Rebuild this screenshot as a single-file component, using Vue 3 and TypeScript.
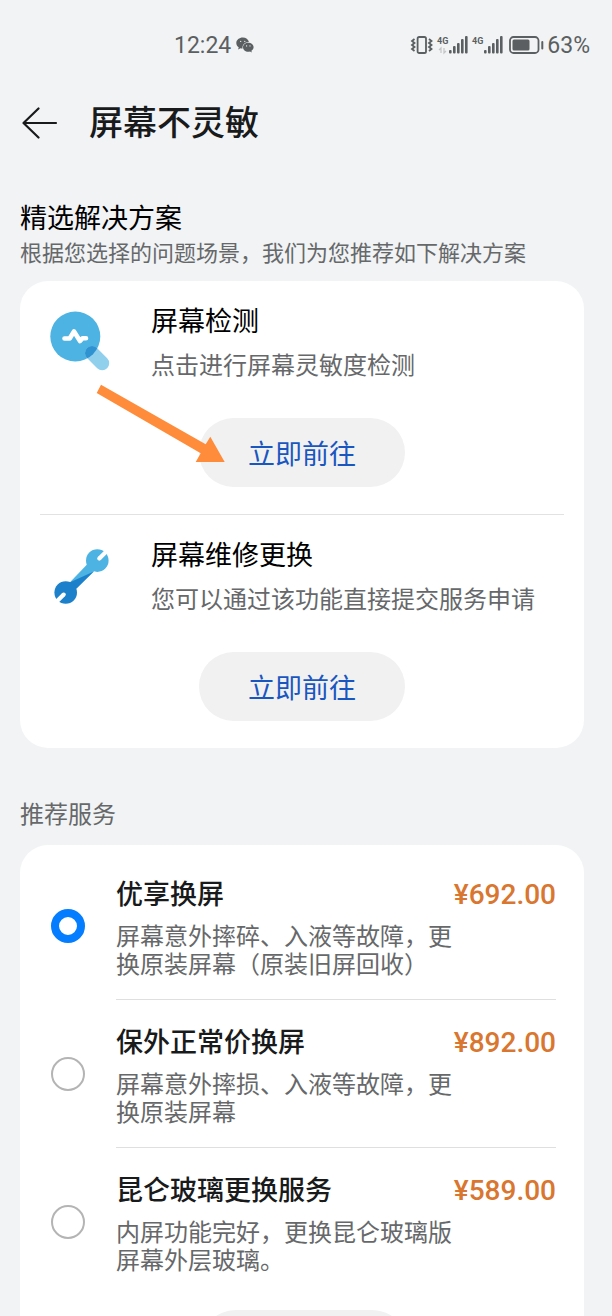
<script setup lang="ts">
import { ref } from 'vue'

interface Solution {
  id: string
  title: string
  desc: string
}

interface Service {
  id: string
  name: string
  desc: string
  price: string
}

const solutions: Solution[] = [
  { id: 'detect', title: '屏幕检测', desc: '点击进行屏幕灵敏度检测' },
  { id: 'repair', title: '屏幕维修更换', desc: '您可以通过该功能直接提交服务申请' },
]

const services: Service[] = [
  { id: 'premium', name: '优享换屏', desc: '屏幕意外摔碎、入液等故障，更换原装屏幕（原装旧屏回收）', price: '¥692.00' },
  { id: 'normal', name: '保外正常价换屏', desc: '屏幕意外摔损、入液等故障，更换原装屏幕', price: '¥892.00' },
  { id: 'glass', name: '昆仑玻璃更换服务', desc: '内屏功能完好，更换昆仑玻璃版屏幕外层玻璃。', price: '¥589.00' },
]

const selected = ref('premium')
const bars = [
  { x: 40, y: 17 },
  { x: 44, y: 13 },
  { x: 48, y: 10 },
  { x: 52, y: 6 },
  { x: 56, y: 3 },
]
</script>

<template>
  <div class="screen">
    <div class="status">
      <div class="status-group">
        <span>12:24</span>
        <svg class="chat" viewBox="0 0 18 16" aria-hidden="true">
          <path d="M6.800 .5C3.300 .5 .3 2.900 .3 6c0 1.800.9 3.300 2.400 4.300l-.6 2.100 2.400-1.200c.7.2 1.400.3 2.100.3C6 8 8.600 5 12.900 5 12.400 2.400 9.900 .5 6.800 .5z" fill="#5c5f61" />
          <path d="M12.300 5.700c-3 0-5.300 2-5.300 4.500s2.300 4.500 5.300 4.500c.6 0 1.200-.1 1.700-.2l1.800.9-.4-1.700c1.300-.8 2.200-2 2.200-3.500 0-2.500-2.400-4.500-5.300-4.500z" fill="#5c5f61" />
          <g fill="#f1f3f5">
            <circle cx="4.700" cy="4.400" r=".6" /><circle cx="8.800" cy="4.400" r=".6" />
            <circle cx="10.600" cy="8.900" r=".6" /><circle cx="14" cy="8.900" r=".6" />
          </g>
        </svg>
      </div>
      <div class="status-group right">
        <svg class="signals" viewBox="0 0 136 24" aria-hidden="true">
          <g fill="none" stroke="#5c5f61" stroke-width="1.800">
            <rect x="8.600" y="4" width="8.400" height="16" rx="1.600" />
            <path d="M5.500 6 3 8l2.500 2L3 12l2.500 2L3 16l2.500 2M20 6l2.500 2-2.500 2 2.500 2-2.500 2 2.500 2-2.500 2" />
            <rect x="101" y="4" width="28.500" height="16" rx="3.500" />
          </g>
          <g fill="#5c5f61">
            <text class="net" x="28" y="11">4G</text>
            <text class="net" x="63" y="11">4G</text>
            <rect v-for="b in bars" :key="b.x" :x="b.x" :y="b.y" width="2.600" :height="20.500 - b.y" rx="1" />
            <rect v-for="b in bars" :key="'s' + b.x" :x="b.x + 35" :y="b.y" width="2.600" :height="20.500 - b.y" rx="1" />
            <rect x="103.500" y="6.500" width="17" height="11" rx="1.500" />
            <rect x="132.300" y="8" width="2" height="8.500" rx="1" />
          </g>
          <path d="M32 20v-5l-2 2M35 15v5l2-2" fill="none" stroke="#c3c5c7" stroke-width="1.200" />
        </svg>
        <span>63%</span>
      </div>
    </div>

    <header class="header">
      <button class="back" type="button" aria-label="返回">
        <svg viewBox="0 0 36 32" fill="none" stroke="#191a1b" stroke-width="2.200" stroke-linecap="round" stroke-linejoin="round" aria-hidden="true">
          <path d="M16.500 1.500 1.500 16l15 14.500M1.500 16H34" />
        </svg>
      </button>
      <h1>屏幕不灵敏</h1>
    </header>

    <main>
      <h2 class="section-title">精选解决方案</h2>
      <p class="section-sub">根据您选择的问题场景，我们为您推荐如下解决方案</p>

      <section class="card solutions">
        <article v-for="s in solutions" :key="s.id" class="solution">
          <div class="solution-head">
            <svg v-if="s.id === 'detect'" class="solution-icon" viewBox="0 0 60 62" aria-hidden="true">
              <defs>
                <clipPath id="lens"><circle cx="25.300" cy="26.500" r="25" /></clipPath>
              </defs>
              <circle cx="25.300" cy="26.500" r="25" fill="#4db3e2" />
              <path d="M42 43 52.200 53.300" stroke="#90d0ed" stroke-width="14" stroke-linecap="round" />
              <path d="M42 43 52.200 53.300" stroke="#3093d1" stroke-width="14" stroke-linecap="round" clip-path="url(#lens)" />
              <path d="M14.500 28.500h5.200l4.300-7 6 9.500 2.500-2.800h3.500" fill="none" stroke="#fff" stroke-width="4.600" stroke-linecap="round" stroke-linejoin="round" />
            </svg>
            <svg v-else class="solution-icon" viewBox="0 0 60 62" aria-hidden="true">
              <path d="M37 20.500 44 27.500 26.700 44.300 20 38.300z" fill="#4db3e2" />
              <circle cx="47.300" cy="16.600" r="11.300" fill="#4db3e2" />
              <path d="M19 38.800 43.300 27.700 25.500 45.500z" fill="#1c80ca" />
              <circle cx="15.700" cy="48.500" r="11.300" fill="#1c80ca" />
              <path d="M49.300 14.600 60 3.900M13.700 50.500 3 61.200" stroke="#fff" stroke-width="4.200" />
              <circle cx="49.300" cy="14.600" r="2.100" fill="#fff" />
              <circle cx="13.700" cy="50.500" r="2.100" fill="#fff" />
            </svg>
            <div class="solution-text">
              <h3>{{ s.title }}</h3>
              <p>{{ s.desc }}</p>
            </div>
          </div>
          <div class="action">
            <button class="pill" type="button">立即前往</button>
            <svg v-if="s.id === 'detect'" class="pointer" viewBox="0 0 130 79" aria-hidden="true">
              <path d="M5 .7 109.700 60.300 114.300 52.700 128.700 78H99.700L104.700 69.300.7 9z" fill="#ff8c3a" />
            </svg>
          </div>
        </article>
      </section>

      <h2 class="group-title">推荐服务</h2>
      <section class="card services">
        <label v-for="s in services" :key="s.id" class="service">
          <input v-model="selected" type="radio" name="service" :value="s.id" />
          <span class="service-body">
            <span class="service-top">
              <span class="service-name">{{ s.name }}</span>
              <span class="price">{{ s.price }}</span>
            </span>
            <span class="service-desc">{{ s.desc }}</span>
          </span>
        </label>
        <div class="action more">
          <button class="pill" type="button" aria-label="立即前往"></button>
        </div>
      </section>
    </main>
  </div>
</template>

<style>
body {
  background: #f1f3f5;
}
</style>

<style scoped>
.screen {
  box-sizing: border-box;
  height: 100vh;
  overflow: hidden;
  background: #f1f3f5;
  color: #000;
  font-family: Roboto, "Noto Sans CJK SC", sans-serif;
}
h1, h2, h3, p {
  margin: 0;
  font-weight: 400;
}
button {
  border: 0;
  padding: 0;
  font-family: inherit;
  cursor: pointer;
}
.status {
  display: flex;
  justify-content: space-between;
  align-items: center;
  height: 90px;
  padding: 0 22px 0 174px;
  color: #5c5f61;
  font-size: 23px;
}
.status-group {
  display: flex;
  align-items: center;
  gap: 5px;
}
.status-group.right {
  gap: 2px;
}
.chat {
  width: 18px;
  height: 16px;
}
.signals {
  width: 136px;
  height: 24px;
}
.net {
  font-size: 9px;
  font-weight: 700;
}
.header {
  display: flex;
  align-items: center;
  gap: 31px;
  height: 66px;
  padding: 0 22px;
}
.back {
  width: 36px;
  height: 32px;
  background: none;
}
.back svg {
  display: block;
  width: 36px;
  height: 32px;
}
h1 {
  color: #191a1b;
  font-size: 34px;
  font-weight: 500;
  line-height: 48px;
}
main {
  padding: 43px 28px 0 20px;
}
.section-title {
  font-size: 27px;
  line-height: 40px;
}
.section-sub {
  margin-bottom: 12px;
  color: #66686a;
  font-size: 22px;
  line-height: 30px;
  white-space: nowrap;
}
.card {
  border-radius: 28px;
  background: #fff;
}
.solution {
  margin: 0 20px;
  padding: 21px 0 27px;
}
.solution + .solution {
  border-top: 1px solid #e2e2e2;
}
.solution-head {
  display: flex;
  gap: 41px;
  padding-left: 10px;
}
.solution-icon {
  flex: none;
  width: 60px;
  height: 62px;
  margin-top: 8px;
}
.solution-text h3 {
  font-size: 27px;
  line-height: 40px;
}
.solution-text p {
  margin-top: 10px;
  color: #66686a;
  font-size: 24px;
  line-height: 28px;
}
.action {
  position: relative;
  width: 206px;
  margin: 38px auto 0;
}
.pill {
  display: block;
  width: 100%;
  height: 69px;
  border-radius: 35px;
  background: #f1f1f1;
  color: #1a56c0;
  font-size: 27px;
}
.pointer {
  position: absolute;
  top: -34px;
  left: -103px;
  width: 130px;
  height: 79px;
  pointer-events: none;
}
.group-title {
  margin: 51px 0 14px;
  color: #66686a;
  font-size: 24px;
  line-height: 32px;
}
.services {
  padding: 7px 28px 28px 31px;
}
.service {
  display: flex;
  align-items: center;
  gap: 31px;
}
.service input {
  flex: none;
  box-sizing: border-box;
  width: 34px;
  height: 34px;
  margin: 0;
  border: 2px solid #b4b4b4;
  border-radius: 50%;
  background: #fff;
  appearance: none;
}
.service input:checked {
  border: 8px solid #047dff;
}
.service-body {
  flex: 1;
  display: flex;
  flex-direction: column;
  gap: 10px;
  padding: 25px 0 20px;
  border-bottom: 1px solid #dfdfdf;
}
.service:nth-of-type(3) .service-body {
  border-bottom-color: transparent;
}
.service-top {
  display: flex;
  justify-content: space-between;
  line-height: 36px;
}
.service-name {
  color: #191a1b;
  font-size: 27px;
  font-weight: 500;
}
.price {
  color: #d9762f;
  font-size: 28px;
  font-weight: 500;
}
.service-desc {
  padding-right: 98px;
  color: #66686a;
  font-size: 24px;
  line-height: 28px;
}
.more {
  margin-top: 14px;
}
</style>
